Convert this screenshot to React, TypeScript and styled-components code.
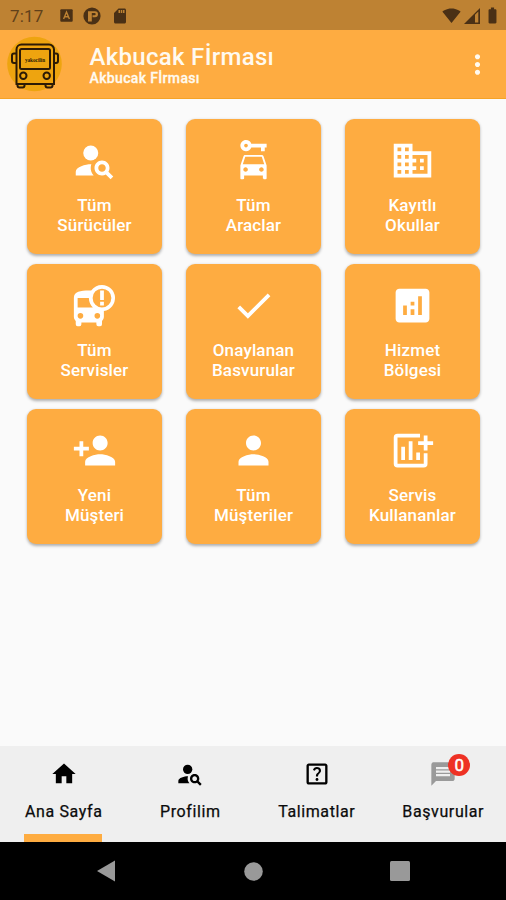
import React from 'react';
import styled, { createGlobalStyle } from 'styled-components';
import type { IconType } from 'react-icons';
import {
  MdPersonSearch, MdCarRental, MdBusiness, MdBusAlert, MdCheck, MdAnalytics, MdPersonAdd,
  MdPerson, MdHome, MdOutlineHelpCenter, MdMessage, MdMoreVert, MdSdCard,
  MdBatteryFull, MdSignalWifi4Bar,
} from 'react-icons/md';

const Global = createGlobalStyle`
  * { box-sizing: border-box; }
  body { margin: 0; background: #fafafa; font-family: Roboto, "Liberation Sans", sans-serif; }
`;

const Screen = styled.div`
  width: 506px;
  height: 900px;
  display: flex;
  flex-direction: column;
  overflow: hidden;
  background: #fafafa;
`;

const StatusBar = styled.div`
  height: 30px;
  flex: none;
  display: flex;
  align-items: center;
  justify-content: space-between;
  padding: 1px 4px 0 10px;
  background: #be8233;
  color: #4a3015;
`;

const StatusGroup = styled.div<{ $gap: number }>`
  display: flex;
  align-items: center;
  gap: ${(p) => p.$gap}px;
`;

const Clock = styled.span`
  width: 40px;
  font-size: 17px;
  letter-spacing: 0.2px;
  line-height: 20px;
  color: #60401a;
`;

const AppBar = styled.header`
  height: 69px;
  flex: none;
  display: flex;
  align-items: center;
  padding: 0 13px 0 7px;
  background: #feac41;
  border-bottom: 1px solid #f5a326;
  color: #fffaf0;
`;

const Titles = styled.div`
  flex: 1;
  margin-left: 26.5px;
`;

const Title = styled.h1`
  margin: 0;
  font-size: 24px;
  line-height: 28px;
  font-weight: 500;
  letter-spacing: 0.3px;
`;

const Subtitle = styled.div`
  font-size: 14px;
  line-height: 15px;
  font-weight: 500;
  letter-spacing: 0.35px;
  -webkit-text-stroke: 0.3px;
`;

const Grid = styled.main`
  flex: 1;
  display: grid;
  grid-template-columns: repeat(3, 135px);
  grid-auto-rows: 135px;
  gap: 10px 24px;
  align-content: start;
  padding: 20px 0 0 27px;
`;

const Tile = styled.button`
  display: flex;
  flex-direction: column;
  align-items: center;
  border: 0;
  border-radius: 9px;
  padding: 19px 0 0;
  background: #feac41;
  box-shadow: 0 1.5px 3px rgba(0, 0, 0, 0.3);
  color: #fff;
  font-family: inherit;

  svg { display: block; flex: none; }
`;

const TileLabel = styled.span`
  margin-top: 13px;
  font-size: 17px;
  line-height: 19.6px;
  font-weight: 500;
  letter-spacing: 0.15px;
  white-space: pre-line;
  text-align: center;
`;

const Tabs = styled.nav`
  height: 96px;
  flex: none;
  display: grid;
  grid-template-columns: repeat(4, 1fr);
  justify-items: center;
  background: #efefef;
`;

const Tab = styled.div<{ $active?: boolean }>`
  display: flex;
  flex-direction: column;
  align-items: center;
  padding: 14px 0 0 1px;
  border-bottom: 8px solid ${(p) => (p.$active ? '#feac41' : 'transparent')};
  color: #0b0b0b;
`;

const TabLabel = styled.span`
  margin-top: 14px;
  font-size: 16px;
  line-height: 20px;
  letter-spacing: 0.6px;
  white-space: nowrap;
  -webkit-text-stroke: 0.25px;
`;

const TabIcon = styled.div<{ $muted?: boolean }>`
  position: relative;
  height: 28px;
  color: ${(p) => (p.$muted ? '#9a9a9a' : '#000')};

  svg { display: block; }
`;

const Badge = styled.span`
  position: absolute;
  left: 19px;
  top: -6px;
  width: 22px;
  height: 22px;
  border-radius: 50%;
  background: #ee3124;
  color: #fff;
  font-size: 17px;
  line-height: 22px;
  text-align: center;
  -webkit-text-stroke: 0.5px;
`;

const SystemNav = styled.footer`
  height: 58px;
  flex: none;
  display: grid;
  grid-template-columns: 212px 82px 212px;
  align-items: center;
  justify-items: center;
  background: #000;
`;

const LauncherGlyph = () => (
  <svg width="13" height="13" viewBox="0 0 13 13">
    <rect x="0.3" y="0.3" width="12.4" height="12.4" rx="1" fill="currentColor" />
    <path d="M3.6 10 6.5 3l2.9 7M4.7 7.8h3.6" fill="none" stroke="#be8233" strokeWidth="1.4" />
  </svg>
);

const CircleGlyph = () => (
  <svg width="18" height="18" viewBox="0 0 18 18">
    <circle cx="9" cy="9" r="8.6" fill="currentColor" />
    <path d="M5 4.3h7a3 3 0 0 1 3 3v0a3 3 0 0 1-3 3H9.500V8.300H11.500a1.200 1.200 0 0 0 0-2.400H8.800V14.500H5z" fill="#be8233" />
  </svg>
);

const SignalGlyph = () => (
  <svg width="16" height="16" viewBox="0 0 16 16">
    <path d="M0 16 16 0v16z" fill="currentColor" />
    <path d="M11 6.8 14.3 3.5V14.4H11z" fill="#be8233" />
  </svg>
);

const AddChartIcon = ({ size = 24 }: { size?: number }) => (
  <svg width={size} height={size} viewBox="0 0 24 24" fill="currentColor">
    <path d="M16 3H4a2 2 0 0 0-2 2v14a2 2 0 0 0 2 2h14a2 2 0 0 0 2-2v-5.500h-2V19H4V5h12z" />
    <path d="M18 4h2v3h3v2h-3v3h-2V9h-3V7h3z" />
    <path d="M6 10h2v7H6zM10 7h2v10h-2zM14 13h2v4h-2z" />
  </svg>
);

const BusLogo = () => (
  <svg width="56" height="58" viewBox="0 0 56 58">
    <circle cx="27.500" cy="29" r="27.300" fill="#eea40f" />
    <g fill="none" stroke="#2c1a05" strokeWidth="2">
      <path d="M9.500 49V14.500a5 5 0 0 1 5-5h27.500a5 5 0 0 1 5 5V49z" />
      <rect x="13" y="14" width="30" height="20" rx="1.500" />
      <path d="M9 18.500H7a2 2 0 0 0-2 2v5.500a2 2 0 0 0 2 2H9M47.500 18.500h1.500a2 2 0 0 1 2 2v5.500a2 2 0 0 1-2 2H47.500" />
      <circle cx="16.300" cy="40.800" r="3.200" />
      <circle cx="39.700" cy="40.800" r="3.200" />
      <path d="M10.500 49v1.500a2 2 0 0 0 2 2h3a2 2 0 0 0 2-2V49M38.500 49v1.500a2 2 0 0 0 2 2h3a2 2 0 0 0 2-2V49" />
    </g>
    <text x="28" y="26.500" textAnchor="middle" fontFamily="Liberation Serif, serif" fontWeight="700" fontSize="5.200" fill="#2c1a05">yakocilin</text>
  </svg>
);

type TileIcon = IconType | typeof AddChartIcon;

const tiles: { icon: TileIcon; label: string }[] = [
  { icon: MdPersonSearch, label: 'Tüm\nSürücüler' },
  { icon: MdCarRental, label: 'Tüm\nAraclar' },
  { icon: MdBusiness, label: 'Kayıtlı\nOkullar' },
  { icon: MdBusAlert, label: 'Tüm\nServisler' },
  { icon: MdCheck, label: 'Onaylanan\nBasvurular' },
  { icon: MdAnalytics, label: 'Hizmet\nBölgesi' },
  { icon: MdPersonAdd, label: 'Yeni\nMüşteri' },
  { icon: MdPerson, label: 'Tüm\nMüşteriler' },
  { icon: AddChartIcon, label: 'Servis\nKullananlar' },
];

const tabs: { icon: IconType; label: string; active?: boolean; count?: number }[] = [
  { icon: MdHome, label: 'Ana Sayfa', active: true },
  { icon: MdPersonSearch, label: 'Profilim' },
  { icon: MdOutlineHelpCenter, label: 'Talimatlar' },
  { icon: MdMessage, label: 'Başvurular', count: 0 },
];

export default function App() {
  return (
    <>
      <Global />
      <Screen>
        <StatusBar>
          <StatusGroup $gap={10}>
            <Clock>7:17</Clock>
            <LauncherGlyph />
            <CircleGlyph />
            <MdSdCard size={18} />
          </StatusGroup>
          <StatusGroup $gap={3}>
            <MdSignalWifi4Bar size={19} />
            <SignalGlyph />
            <MdBatteryFull size={19} />
          </StatusGroup>
        </StatusBar>
        <AppBar>
          <BusLogo />
          <Titles>
            <Title>Akbucak Fİrması</Title>
            <Subtitle>Akbucak Fİrması</Subtitle>
          </Titles>
          <MdMoreVert size={31} />
        </AppBar>
        <Grid>
          {tiles.map(({ icon: Icon, label }) => (
            <Tile key={label}>
              <Icon size={45} />
              <TileLabel>{label}</TileLabel>
            </Tile>
          ))}
        </Grid>
        <Tabs>
          {tabs.map(({ icon: Icon, label, active, count }) => (
            <Tab key={label} $active={active}>
              <TabIcon $muted={count !== undefined}>
                <Icon size={28} />
                {count !== undefined && <Badge>{count}</Badge>}
              </TabIcon>
              <TabLabel>{label}</TabLabel>
            </Tab>
          ))}
        </Tabs>
        <SystemNav>
          <svg width="18" height="22" viewBox="0 0 18 22"><path d="M0 11 18 .5v21z" fill="#999" /></svg>
          <svg width="19" height="19" viewBox="0 0 19 19"><circle cx="9.500" cy="9.500" r="9.300" fill="#999" /></svg>
          <svg width="20" height="20" viewBox="0 0 20 20"><rect width="20" height="20" rx="1.500" fill="#999" /></svg>
        </SystemNav>
      </Screen>
    </>
  );
}
